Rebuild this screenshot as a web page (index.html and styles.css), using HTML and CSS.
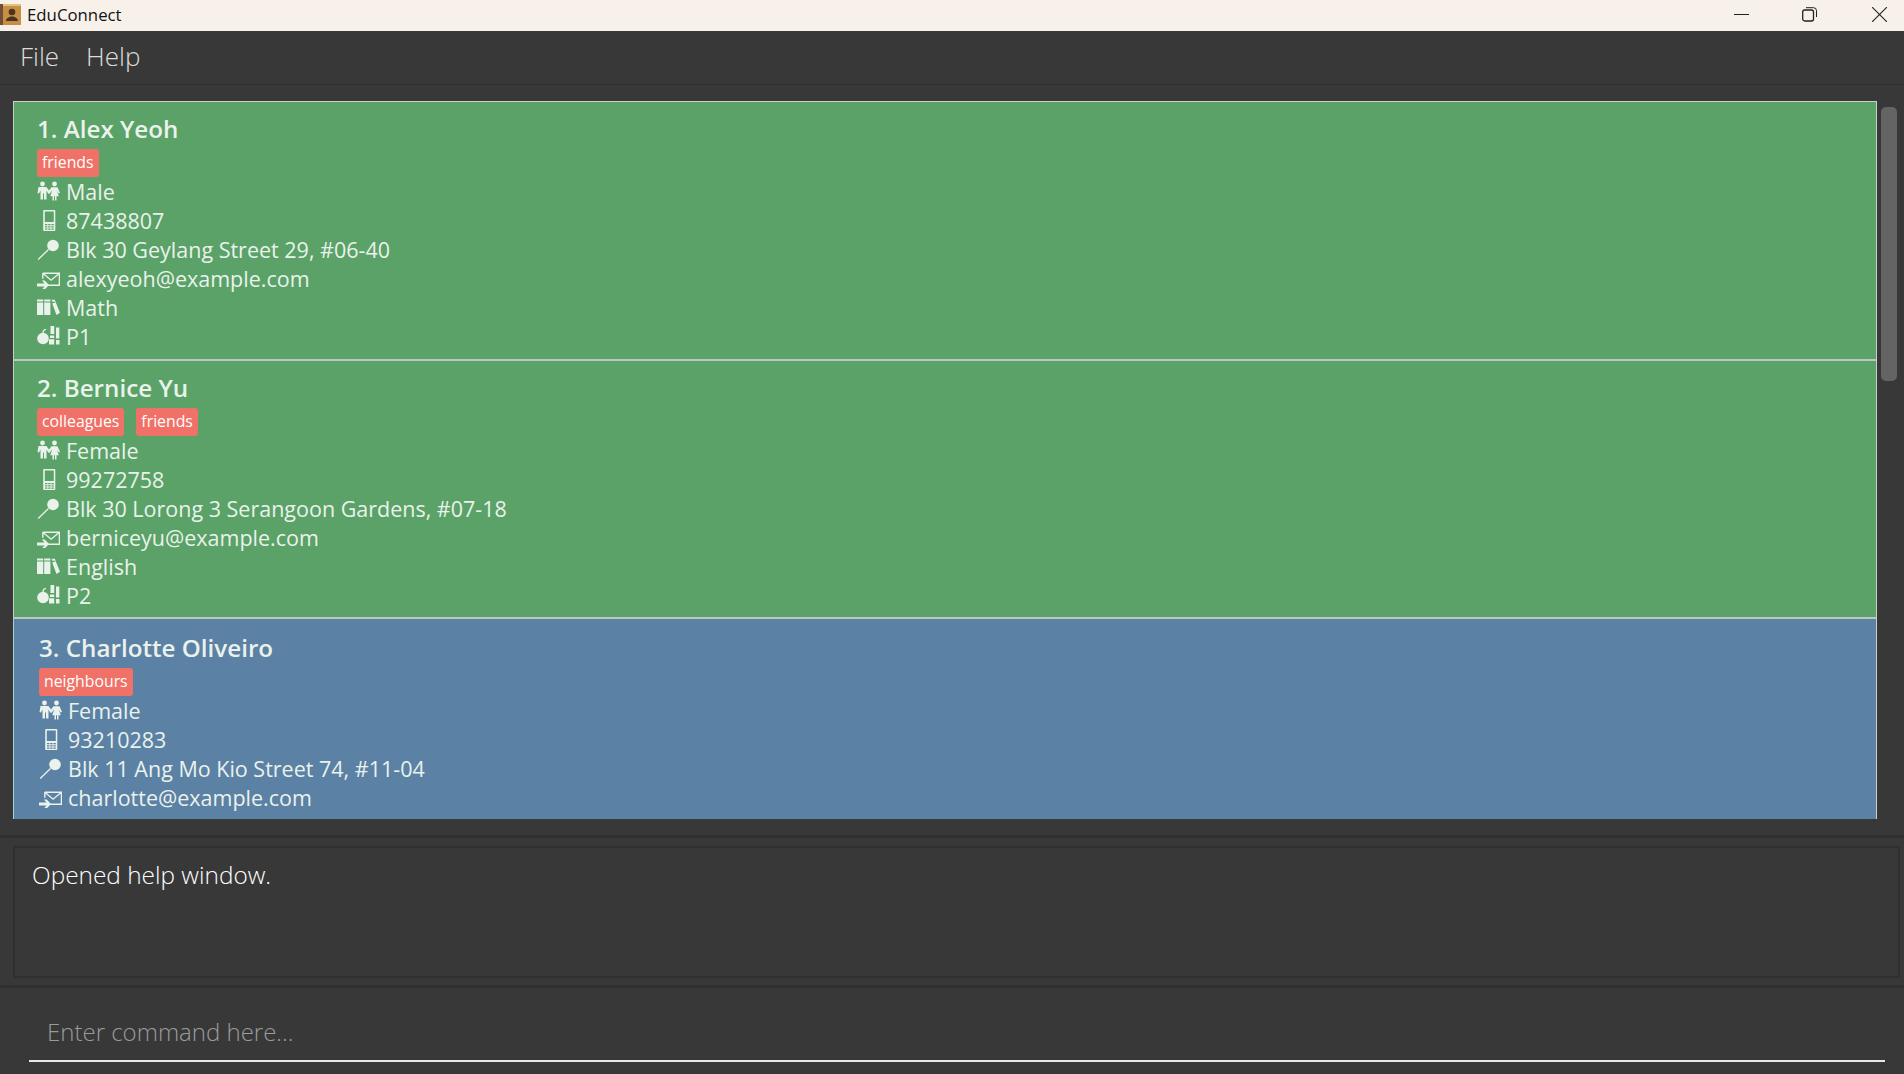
FILE: index.html
```html
<!DOCTYPE html>
<html lang="en">
<head>
    <meta charset="UTF-8">
    <meta name="viewport" content="width=device-width, initial-scale=1.0">
    <title>EduConnect</title>
    <link rel="stylesheet" href="styles.css">
</head>
<body>
    <svg class="sprites" width="0" height="0">
        <symbol id="i-gender" viewBox="0 0 23 21">
            <circle cx="5.500" cy="3" r="2.400"/>
            <circle cx="17.500" cy="3" r="2.400"/>
            <path d="M1.500 6h8l2.500 3.500L14.500 6.200h6l2.500 5.600-1.500.8-1.700-3.300 2 6h-2.300v4.200h-1.500v-4.200h-1v4.200h-1.500v-4.200h-2.300l2-6-2.600 3.400h-1.300L9.500 9.400v9.100H7v-6H6v6H3.500V9.500L2 12.500.5 12z"/>
        </symbol>
        <symbol id="i-phone" viewBox="0 0 23 21">
            <path fill-rule="evenodd" d="M7 0h10.500q.8 0 .8 1v19q0 1-.8 1H7q-.8 0-.8-1V1q0-1 .8-1zM7.800 1.500V12h9V1.500zM8 14v1.300h2.400V14zm3.200 0v1.300h2.400V14zm3.200 0v1.300h2.400V14zM8 16.300v1.300h2.400v-1.300zm3.200 0v1.300h2.400v-1.300zm3.200 0v1.300h2.400v-1.300zM8 18.500v1.200h2.400v-1.200zm3.200 0v1.200h2.400v-1.200zm3.200 0v1.200h2.400v-1.200z"/>
        </symbol>
        <symbol id="i-pin" viewBox="0 0 23 21">
            <circle cx="16" cy="6.500" r="5.800"/>
            <path d="M11.500 10.500 1.200 20.500" fill="none" stroke="currentColor" stroke-width="1.300"/>
        </symbol>
        <symbol id="i-mail" viewBox="0 0 23 21">
            <path d="M5.800 5.200h16.600v12H11M5.800 5.200v5.500M5.800 5.200l8.300 7 8.300-7" fill="none" stroke="currentColor" stroke-width="1.400"/>
            <path d="M0 15.500h7.500l-2.600-3h2.800l4.300 4.500-4.300 4.500H4.900l2.600-3H0z"/>
        </symbol>
        <symbol id="i-books" viewBox="0 0 23 21">
            <path d="M0 2.500h6.200v2H0zM7.200 2.500h6.200v2H7.200zM14.500 2.800h3.300l1 2h-3.400zM0 5.500h6.200v12.500H0zM7.200 5.500h6.200v12.500H7.200zM15.200 6.500l3.500-1.300 4.300 10.500-3.500 2.300z"/>
        </symbol>
        <symbol id="i-grade" viewBox="0 0 23 21">
            <circle cx="6" cy="12.500" r="5.800"/>
            <path d="M6 7C6 4.500 7 3.500 9 3.300" fill="none" stroke="currentColor" stroke-width="1.300"/>
            <path d="M13.500 0h3.700v8h-3.700zM13 9.500h4.200v2.500H13zM12 13.200h5.200v5.300H12zM19 1.500h3.300v11H19zM19 14h3.500v4.500H19z"/>
        </symbol>
    </svg>

    <div class="window">
        <div class="titlebar">
            <svg class="app-icon" viewBox="0 0 21 21">
                <rect width="21" height="21" fill="#c58f45"/>
                <rect width="3" height="21" fill="#6f5034"/>
                <rect x="3" y="0" width="18" height="2" fill="#e8bf7c"/>
                <circle cx="12" cy="8" r="3.300" fill="#4a3320"/>
                <path d="M6 17c0-3 3-3.500 4.500-4.500h3C15 13.500 18 14 18 17z" fill="#4a3320"/>
            </svg>
            <span class="app-name">EduConnect</span>
            <div class="win-controls">
                <svg viewBox="0 0 15 15"><path d="M0 7.500h15" stroke="#222" fill="none"/></svg>
                <svg viewBox="0 0 15 15"><rect x=".7" y="3" width="10.800" height="11" rx="2" stroke="#222" stroke-width="1.300" fill="none"/><path d="M4 .7h7.500q3 0 3 3V10" stroke="#222" fill="none"/></svg>
                <svg viewBox="0 0 15 15"><path d="M0 0l15 15M15 0L0 15" stroke="#222" stroke-width="1.100" fill="none"/></svg>
            </div>
        </div>

        <nav class="menubar">
            <span>File</span>
            <span>Help</span>
        </nav>

        <div class="list-panel">
            <div class="card-list">
                <div class="card">
                    <div class="name">1. Alex Yeoh</div>
                    <div class="tags"><span class="tag">friends</span></div>
                    <div class="row"><svg class="icon"><use href="#i-gender"/></svg>Male</div>
                    <div class="row"><svg class="icon"><use href="#i-phone"/></svg>87438807</div>
                    <div class="row"><svg class="icon"><use href="#i-pin"/></svg>Blk 30 Geylang Street 29, #06-40</div>
                    <div class="row"><svg class="icon"><use href="#i-mail"/></svg>alexyeoh@example.com</div>
                    <div class="row"><svg class="icon"><use href="#i-books"/></svg>Math</div>
                    <div class="row"><svg class="icon"><use href="#i-grade"/></svg>P1</div>
                </div>
                <div class="card">
                    <div class="name">2. Bernice Yu</div>
                    <div class="tags"><span class="tag">colleagues</span><span class="tag">friends</span></div>
                    <div class="row"><svg class="icon"><use href="#i-gender"/></svg>Female</div>
                    <div class="row"><svg class="icon"><use href="#i-phone"/></svg>99272758</div>
                    <div class="row"><svg class="icon"><use href="#i-pin"/></svg>Blk 30 Lorong 3 Serangoon Gardens, #07-18</div>
                    <div class="row"><svg class="icon"><use href="#i-mail"/></svg>berniceyu@example.com</div>
                    <div class="row"><svg class="icon"><use href="#i-books"/></svg>English</div>
                    <div class="row"><svg class="icon"><use href="#i-grade"/></svg>P2</div>
                </div>
                <div class="card selected">
                    <div class="name">3. Charlotte Oliveiro</div>
                    <div class="tags"><span class="tag">neighbours</span></div>
                    <div class="row"><svg class="icon"><use href="#i-gender"/></svg>Female</div>
                    <div class="row"><svg class="icon"><use href="#i-phone"/></svg>93210283</div>
                    <div class="row"><svg class="icon"><use href="#i-pin"/></svg>Blk 11 Ang Mo Kio Street 74, #11-04</div>
                    <div class="row"><svg class="icon"><use href="#i-mail"/></svg>charlotte@example.com</div>
                </div>
            </div>
            <div class="scrollbar"><div class="thumb"></div></div>
        </div>

        <div class="result-panel">
            <div class="result-box">Opened help window.</div>
        </div>

        <div class="command-panel">
            <div class="command-input">Enter command here...</div>
        </div>
    </div>
</body>
</html>
```

FILE: styles.css
```css
* {
    box-sizing: border-box;
}

body {
    margin: 0;
    background-color: #383838;
    font-family: "Open Sans", "Liberation Sans", sans-serif;
    overflow: hidden;
}

.sprites {
    display: block;
}

.window {
    display: flex;
    flex-direction: column;
    height: 100vh;
}

.titlebar {
    display: flex;
    align-items: center;
    height: 31px;
    padding-bottom: 3px;
    background-color: #f8f1e9;
    color: #111;
    font-size: 16.800px;
}

.app-icon {
    width: 21px;
    height: 21px;
    margin-right: 6px;
}

.win-controls {
    margin-left: auto;
    display: flex;
    gap: 53px;
    padding-right: 17px;
}

.win-controls svg {
    width: 15px;
    height: 15px;
}

.win-controls svg:nth-child(2) {
    margin-right: 2px;
}

.menubar {
    display: flex;
    gap: 27px;
    height: 54px;
    padding: 0 20px 3px;
    align-items: center;
    color: #ddd;
    font-size: 26px;
    font-weight: 300;
    border-bottom: 1px solid #2e2e2e;
}

.list-panel {
    display: flex;
    height: 750px;
    padding: 16px 7px 0 13px;
    gap: 4px;
}

.card-list {
    flex: 1;
    height: 718px;
    overflow: hidden;
    border-right: 1px solid #c9cfca;
}

.card {
    height: 258px;
    padding: 7px 24px 0 23px;
    background-color: #5aa267;
    border-top: 1px solid #c8d0ca;
    border-left: 1px solid #c8d0ca;
    color: #eaf2ec;
}

.card + .card {
    padding-top: 7px;
    border-top: 2px solid #bcc8bf;
}

.card.selected {
    padding: 9px 24px 0 25px;
    background-color: #5b81a5;
    border-left: 1px solid #b9c8d4;
    box-shadow: inset 1px 0 0 #4d8aa2;
}

.name {
    height: 40px;
    line-height: 40px;
    font-size: 24.200px;
    font-weight: 550;
    white-space: nowrap;
}

.tags {
    display: flex;
    gap: 12px;
    height: 28px;
    align-items: center;
}

.tag {
    height: 28px;
    padding: 0 5px;
    line-height: 27px;
    background-color: #f07167;
    border-radius: 3px;
    color: #fff;
    font-size: 15.800px;
    font-weight: 500;
}

.row {
    display: flex;
    align-items: center;
    height: 29px;
    font-size: 21.500px;
    white-space: nowrap;
}

.icon {
    flex: none;
    width: 23px;
    height: 21px;
    margin-right: 6px;
    fill: currentColor;
}

.scrollbar {
    width: 16px;
    height: 718px;
    padding-top: 6px;
}

.thumb {
    height: 274px;
    background-color: #646464;
    border-radius: 5px;
}

.result-panel {
    height: 153px;
    padding: 8px 4px 8px 13px;
    border-top: 3px solid #303030;
    border-bottom: 3px solid #303030;
}

.result-box {
    height: 132px;
    padding: 10px 17px;
    border: 2px solid #2f2f2f;
    color: #fff;
    font-size: 24.400px;
    font-weight: 300;
}

.command-panel {
    flex: 1;
    padding: 0 19px 0 29px;
}

.command-input {
    height: 74px;
    padding: 27px 18px 0;
    border-bottom: 2px solid #e8e8e8;
    color: #9b9b9b;
    font-size: 24px;
    font-weight: 300;
}
```
